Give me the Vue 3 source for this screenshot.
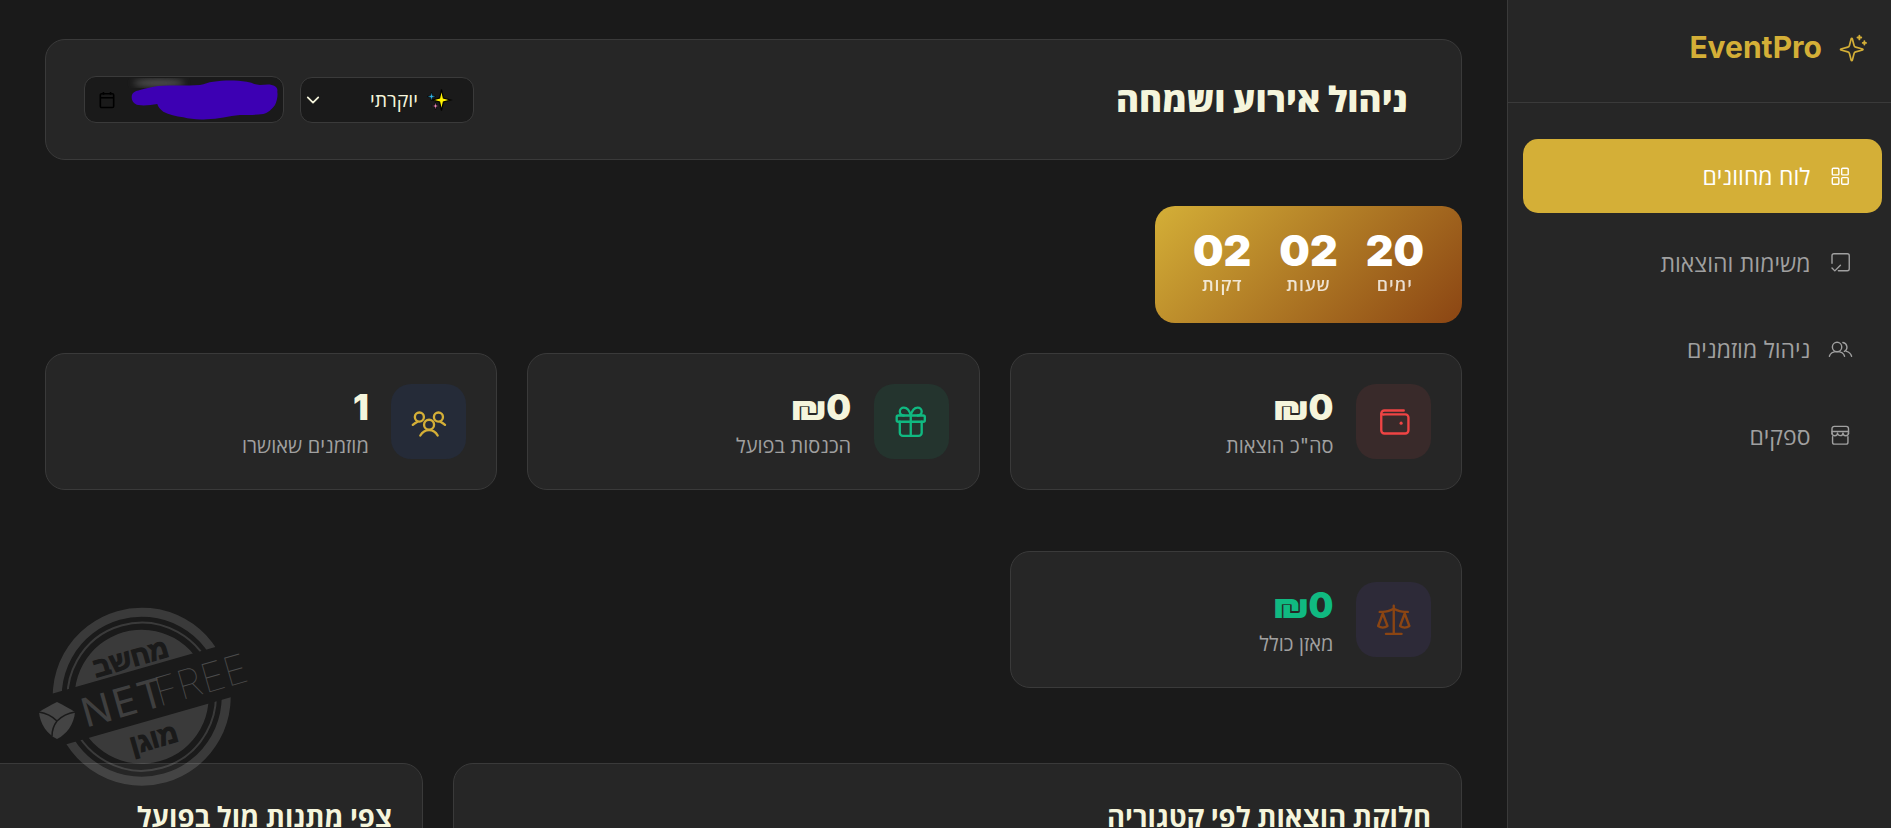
<script setup>
const navItems = [
  { label: 'לוח מחוונים', icon: 'grid', active: true },
  { label: 'משימות והוצאות', icon: 'check' },
  { label: 'ניהול מוזמנים', icon: 'users' },
  { label: 'ספקים', icon: 'store' }
]
const countdown = [
  { value: '20', label: 'ימים' },
  { value: '02', label: 'שעות' },
  { value: '02', label: 'דקות' }
]
</script>

<template>
  <div class="app" dir="rtl">
    <aside class="sidebar">
      <div class="brand">
        <svg class="brand-icon" viewBox="0 0 24 24">
          <g transform="translate(-1 2) translate(12 12) scale(.9) translate(-12 -12)">
            <path d="M9.937 15.5A2 2 0 0 0 8.5 14.063l-6.135-1.582a.5.5 0 0 1 0-.962L8.5 9.936A2 2 0 0 0 9.937 8.5l1.582-6.135a.5.5 0 0 1 .963 0L14.063 8.5A2 2 0 0 0 15.5 9.937l6.135 1.581a.5.5 0 0 1 0 .964L15.5 14.063a2 2 0 0 0-1.437 1.437l-1.582 6.135a.5.5 0 0 1-.963 0z" />
          </g>
          <path d="M17.1 2.9v3M15.6 4.4h3M21.1 7.4v2.6M19.8 8.7h2.6" />
        </svg>
        <span class="brand-name">EventPro</span>
      </div>
      <nav class="nav">
        <a v-for="item in navItems" :key="item.label" class="nav-item" :class="{ active: item.active }">
          <svg class="nav-icon" viewBox="0 0 24 24">
            <template v-if="item.icon === 'grid'">
              <rect x="3.5" y="3.5" width="7" height="7" rx="1" />
              <rect x="13.5" y="3.5" width="7" height="7" rx="1" />
              <rect x="3.5" y="13.5" width="7" height="7" rx="1" />
              <rect x="13.5" y="13.5" width="7" height="7" rx="1" />
            </template>
            <template v-else-if="item.icon === 'check'">
              <path d="M3.2 13V5a2 2 0 0 1 2-2h14.4a2 2 0 0 1 2 2v14a2 2 0 0 1-2 2H10" />
              <path d="M3.2 18.2l3 3 6-6" />
            </template>
            <template v-else-if="item.icon === 'users'">
              <circle cx="8.6" cy="9.6" r="5" />
              <path d="M.4 19.5c1-3.6 4.4-5 8.2-5s7.1 1.4 8 5" />
              <path d="M14.8 4.8a5 5 0 0 1 1.6 9.4M18.6 14.2c2.8.7 4.7 2.6 5.5 5.3" />
            </template>
            <template v-else>
              <path d="M3.2 10.5V5a2.5 2.5 0 0 1 2.5-2.5h12.6A2.5 2.5 0 0 1 20.8 5v5.5" />
              <path d="M3.2 8h17.6" />
              <path d="M3.2 9.5a2.9 2.9 0 0 0 5.9 0 2.9 2.9 0 0 0 5.8 0 2.9 2.9 0 0 0 5.9 0" />
              <path d="M3.8 13.5v6A2 2 0 0 0 5.8 21.5h12.4a2 2 0 0 0 2-2v-6" />
            </template>
          </svg>
          <span>{{ item.label }}</span>
        </a>
      </nav>
    </aside>

    <main class="main">
      <header class="topbar">
        <h1 class="page-title">ניהול אירוע ושמחה</h1>
        <div class="controls">
          <div class="select">
            <svg class="sparkle" viewBox="0 0 24 24">
              <path class="spark-yellow" d="M14.5 1.5l1.9 8.6 7.1 1.9-7.1 1.9-1.9 8.6-1.9-8.6L5.5 12l7.1-1.9z" />
              <path class="spark-blue" d="M4.5 4l.9 3.6L9 8.5l-3.6.9-.9 3.6-.9-3.6L0 8.5l3.6-.9z" />
              <path class="spark-pink" d="M8.5 14l.8 3.2 3.2.8-3.2.8-.8 3.2-.8-3.2-3.2-.8 3.2-.8z" />
            </svg>
            <span>יוקרתי</span>
            <svg class="chevron" viewBox="0 0 16 16">
              <path d="M2 5l6 6 6-6" />
            </svg>
          </div>
          <div class="date">
            <svg class="calendar" viewBox="0 0 18 20">
              <path d="M5 1v3M13 1v3" />
              <rect x="1.5" y="3" width="15" height="15.5" rx="1.5" />
              <path d="M1.5 7.5h15" />
            </svg>
            <svg class="scribble" viewBox="0 0 200 47">
              <defs>
                <filter id="smear"><feGaussianBlur stdDeviation="3" /></filter>
              </defs>
              <ellipse class="smear" cx="75" cy="7" rx="26" ry="4" filter="url(#smear)" />
              <path class="blob" d="M47.7 20.7C48 16 52 15 56 14C62 12 68 11 74.3 10C88 9 102 10 116 9C121 8 124 6 129.3 5.7C140 4 152 4 162.7 5.7C167 6 171 9 176 9C180 9 184 8 187.7 9C192 10 194 12 193.3 15.7C194 20 193 25 191 29C188 33 184 37 179.3 38C171 39 164 39 156 39C145 40 134 43 122.7 43.3C114 44 106 43 99.3 41.3C92 40 85 39 79.3 35.7C76 33 74 31 73.3 28C67 29 60 30 54.3 29C50 28 47.5 25 47.7 20.7Z" />
            </svg>
          </div>
        </div>
      </header>

      <section class="countdown">
        <div v-for="(unit, i) in countdown" :key="i" class="unit">
          <div class="unit-value">{{ unit.value }}</div>
          <div class="unit-label">{{ unit.label }}</div>
        </div>
      </section>

      <section class="stats">
        <article class="stat">
          <div class="stat-icon red">
            <svg viewBox="0 0 24 24">
              <path d="M18.4 4.8H6a2 2 0 0 0-2 2v10.7a2 2 0 0 0 2 2h13.4a2 2 0 0 0 2-2V9.3a2 2 0 0 0-2-2H6a2 2 0 0 1-2-.6" />
              <path class="dot" d="M16.7 12.9h.01" />
            </svg>
          </div>
          <div class="stat-body">
            <div class="stat-value">₪0</div>
            <div class="stat-label">סה"כ הוצאות</div>
          </div>
        </article>
        <article class="stat">
          <div class="stat-icon green">
            <svg viewBox="0 0 24 24">
              <rect x="3" y="8" width="18" height="4" rx="1" />
              <path d="M12 8v13" />
              <path d="M19 12v7a2 2 0 0 1-2 2H7a2 2 0 0 1-2-2v-7" />
              <path d="M7.5 8a2.5 2.5 0 0 1 0-5A4.8 8 0 0 1 12 8a4.8 8 0 0 1 4.5-5 2.5 2.5 0 0 1 0 5" />
            </svg>
          </div>
          <div class="stat-body">
            <div class="stat-value">₪0</div>
            <div class="stat-label">הכנסות בפועל</div>
          </div>
        </article>
        <article class="stat">
          <div class="stat-icon blue">
            <svg viewBox="0 0 24 24">
              <circle cx="12.2" cy="13.9" r="3.2" />
              <path d="M6.6 20.8c1.2-2 3.2-3.4 5.6-3.4s4.4 1.4 5.5 3.4" />
              <circle cx="6" cy="9" r="2.9" />
              <path d="M1.8 14c1-.9 2-1.5 3-2" />
              <circle cx="18.2" cy="9" r="2.9" />
              <path d="M22.4 14c-1-.9-2-1.5-3-2" />
            </svg>
          </div>
          <div class="stat-body">
            <div class="stat-value">1</div>
            <div class="stat-label">מוזמנים שאושרו</div>
          </div>
        </article>
      </section>

      <section class="stats stats-second">
        <article class="stat">
          <div class="stat-icon purple">
            <svg viewBox="0 0 24 24">
              <path d="m16 16 3-8 3 8c-.87.65-1.92 1-3 1s-2.13-.35-3-1Z" />
              <path d="m2 16 3-8 3 8c-.87.65-1.92 1-3 1s-2.13-.35-3-1Z" />
              <path d="M7 21h10" />
              <path d="M12 3v18" />
              <path d="M3 7h2c2 0 5-1 7-2 2 1 5 2 7 2h2" />
            </svg>
          </div>
          <div class="stat-body">
            <div class="stat-value positive">₪0</div>
            <div class="stat-label">מאזן כולל</div>
          </div>
        </article>
      </section>

      <section class="charts">
        <article class="chart">
          <h2 class="chart-title">חלוקת הוצאות לפי קטגוריה</h2>
        </article>
        <article class="chart">
          <h2 class="chart-title">צפי מתנות מול בפועל</h2>
        </article>
      </section>
    </main>

    <svg class="stamp" viewBox="20 590 240 210">
      <defs>
        <clipPath id="stamp-clip">
          <rect x="-100" y="-100" width="200" height="72.5" />
          <rect x="-100" y="25" width="200" height="75" />
        </clipPath>
      </defs>
      <g transform="translate(141.7 696.7) rotate(-16)">
        <g clip-path="url(#stamp-clip)">
          <circle class="ring" cx="0" cy="0" r="84.5" stroke-width="9" />
          <circle class="ring" cx="0" cy="0" r="74" stroke-width="2" />
          <circle class="disc" cx="0" cy="0" r="67" />
        </g>
        <text class="stamp-heb" x="0" y="-31" text-anchor="middle">מחשב</text>
        <text class="stamp-heb" x="0" y="53" text-anchor="middle">מוגן</text>
        <text class="stamp-net" x="-62" y="14.5">NET</text>
        <text class="stamp-free" x="14" y="14.5">FREE</text>
      </g>
      <path class="shield" d="M39 712c6-4 12-7 18-10 6 3 12 6 18 10-1 12-8 22-18 27-10-5-17-15-18-27z" />
      <path class="shield-line" d="M39 712c6 1 12 3 18 9 6-6 12-8 18-9M57 721c-3 4-5 9-5 15" />
    </svg>
  </div>
</template>

<style>
html, body { margin: 0; background: #1a1a1a; overflow: hidden; }
</style>

<style scoped>
.app {
  position: relative;
  display: flex;
  height: 828px;
  overflow: hidden;
  background: #1a1a1a;
  font-family: "Inter", "Open Sans", sans-serif;
  color: #f5f5dc;
}
.sidebar {
  flex: 0 0 384px;
  box-sizing: border-box;
  background: #262626;
  border-left: 1px solid #3a3a3a;
}
.brand {
  box-sizing: border-box;
  height: 103px;
  display: flex;
  align-items: center;
  gap: 16px;
  padding: 0 23px 8px 0;
  border-bottom: 1px solid #3a3a3a;
}
.brand-icon {
  width: 30px;
  height: 30px;
  fill: none;
  stroke: #d4af37;
  stroke-width: 1.5;
  stroke-linecap: round;
  stroke-linejoin: round;
}
.brand-name {
  font-size: 30px;
  font-weight: 700;
  line-height: 1;
  color: #d4af37;
}
.nav {
  display: flex;
  flex-direction: column;
  gap: 12.5px;
  padding: 36px 9px 0 15px;
}
.nav-item {
  height: 74px;
  display: flex;
  align-items: center;
  gap: 18px;
  padding-right: 31px;
  border-radius: 15px;
  font-size: 23px;
  color: #a0a0a0;
}
.nav-item.active {
  background: #d4af37;
  color: #fff;
}
.nav-icon {
  flex: none;
  width: 22.5px;
  height: 22.5px;
  overflow: visible;
  fill: none;
  stroke: currentColor;
  stroke-width: 1.5;
  stroke-linecap: round;
  stroke-linejoin: round;
}
.main {
  flex: 1;
  min-width: 0;
  padding: 39px 45px 0;
  box-sizing: border-box;
}
.topbar {
  box-sizing: border-box;
  height: 121px;
  display: flex;
  align-items: center;
  justify-content: space-between;
  padding: 0 53px 0 38px;
  background: #262626;
  border: 1px solid #3a3a3a;
  border-radius: 20px;
}
.page-title {
  margin: 0 0 2px;
  font-size: 35px;
  font-weight: 800;
}
.controls {
  display: flex;
  align-items: center;
  gap: 16px;
}
.select {
  box-sizing: border-box;
  width: 174px;
  height: 46px;
  display: flex;
  align-items: center;
  gap: 9px;
  padding: 0 22px 0 0;
  background: #1a1a1a;
  border: 1px solid #3a3a3a;
  border-radius: 12px;
  font-size: 19.5px;
}
.sparkle { width: 24px; height: 24px; flex: none; overflow: visible; }
.spark-yellow { fill: #fff200; stroke: #000; stroke-width: 1.2; }
.spark-blue { fill: #35b6e8; stroke: #000; stroke-width: .6; }
.spark-pink { fill: #f28dc0; stroke: #000; stroke-width: .6; }
.chevron {
  margin-right: auto;
  margin-left: 5px;
  width: 14px;
  height: 14px;
  fill: none;
  stroke: #f5f5dc;
  stroke-width: 2;
  stroke-linecap: round;
  stroke-linejoin: round;
}
.date {
  position: relative;
  box-sizing: border-box;
  width: 200px;
  height: 47px;
  background: #1a1a1a;
  border: 1px solid #3a3a3a;
  border-radius: 12px;
  display: flex;
  align-items: center;
  justify-content: flex-end;
  padding-left: 14px;
}
.calendar {
  width: 16px;
  height: 18px;
  fill: none;
  stroke: #000;
  stroke-width: 1.8;
}
.scribble {
  position: absolute;
  inset: -1px;
  width: 200px;
  height: 47px;
}
.blob { fill: #3d00b3; }
.smear { fill: #666; opacity: .7; }
.countdown {
  box-sizing: border-box;
  width: 307px;
  height: 117px;
  margin-top: 46px;
  display: flex;
  align-items: flex-start;
  justify-content: space-between;
  padding: 19px 38px 0;
  border-radius: 20px;
  background: linear-gradient(135deg, #d4af37, #8b4513);
  color: #fff;
}
.unit { text-align: center; }
.unit-value {
  font-size: 43px;
  font-weight: 900;
  line-height: 50px;
}
.unit-label {
  margin-top: -1px;
  font-size: 17.5px;
  font-weight: 600;
  letter-spacing: 1px;
  line-height: 22px;
  opacity: .8;
}
.stats {
  display: grid;
  grid-template-columns: repeat(3, 1fr);
  gap: 30px;
  margin-top: 30px;
}
.stats-second { margin-top: 61px; }
.stat {
  box-sizing: border-box;
  height: 137px;
  display: flex;
  align-items: center;
  gap: 22.5px;
  padding: 0 30px;
  background: #262626;
  border: 1px solid #3a3a3a;
  border-radius: 20px;
}
.stat-icon {
  flex: none;
  width: 75px;
  height: 75px;
  display: flex;
  align-items: center;
  justify-content: center;
  border-radius: 20px;
}
.stat-icon svg {
  width: 37.5px;
  height: 37.5px;
  fill: none;
  stroke: currentColor;
  stroke-width: 1.5;
  stroke-linecap: round;
  stroke-linejoin: round;
  overflow: visible;
}
.stat-icon .dot { stroke-width: 2; }
.red { background: #392a2a; color: #ef4444; }
.green { background: #24342e; color: #10b981; }
.blue { background: #252b38; color: #d4af37; }
.purple { background: #2d2a38; color: #8b4513; }
.stat-value {
  font-size: 35px;
  font-weight: 900;
  line-height: 42px;
}
.positive { color: #10b981; }
.stat-label {
  margin-top: 6px;
  font-size: 20px;
  line-height: 24px;
  color: #a0a0a0;
}
.charts {
  display: grid;
  grid-template-columns: 1009px 500px;
  gap: 30px;
  margin-top: 75px;
}
.chart {
  box-sizing: border-box;
  height: 300px;
  padding: 38px 30px;
  background: #262626;
  border: 1px solid #3a3a3a;
  border-radius: 20px;
}
.chart-title {
  margin: 0;
  font-size: 27.5px;
  font-weight: 700;
  line-height: 30px;
}
.stamp {
  position: absolute;
  left: 20px;
  top: 590px;
  width: 240px;
  height: 210px;
  pointer-events: none;
  overflow: visible;
  direction: ltr;
}
.ring { fill: none; stroke: rgba(255, 255, 255, .14); }
.disc { fill: rgba(255, 255, 255, .14); }
.stamp-heb {
  font-family: "Liberation Sans", sans-serif;
  font-size: 27px;
  font-weight: 700;
  fill: #1a1a1a;
  stroke: #1a1a1a;
  stroke-width: 1.2;
}
.stamp-net {
  font-family: "Inter", sans-serif;
  font-size: 40px;
  font-weight: 400;
  letter-spacing: 2px;
  fill: #3f3f3f;
}
.stamp-free {
  font-family: "Inter", sans-serif;
  font-size: 40px;
  font-weight: 100;
  fill: #4a4a4a;
}
.shield { fill: #444; }
.shield-line { fill: none; stroke: #1a1a1a; stroke-width: 1.5; }
</style>
